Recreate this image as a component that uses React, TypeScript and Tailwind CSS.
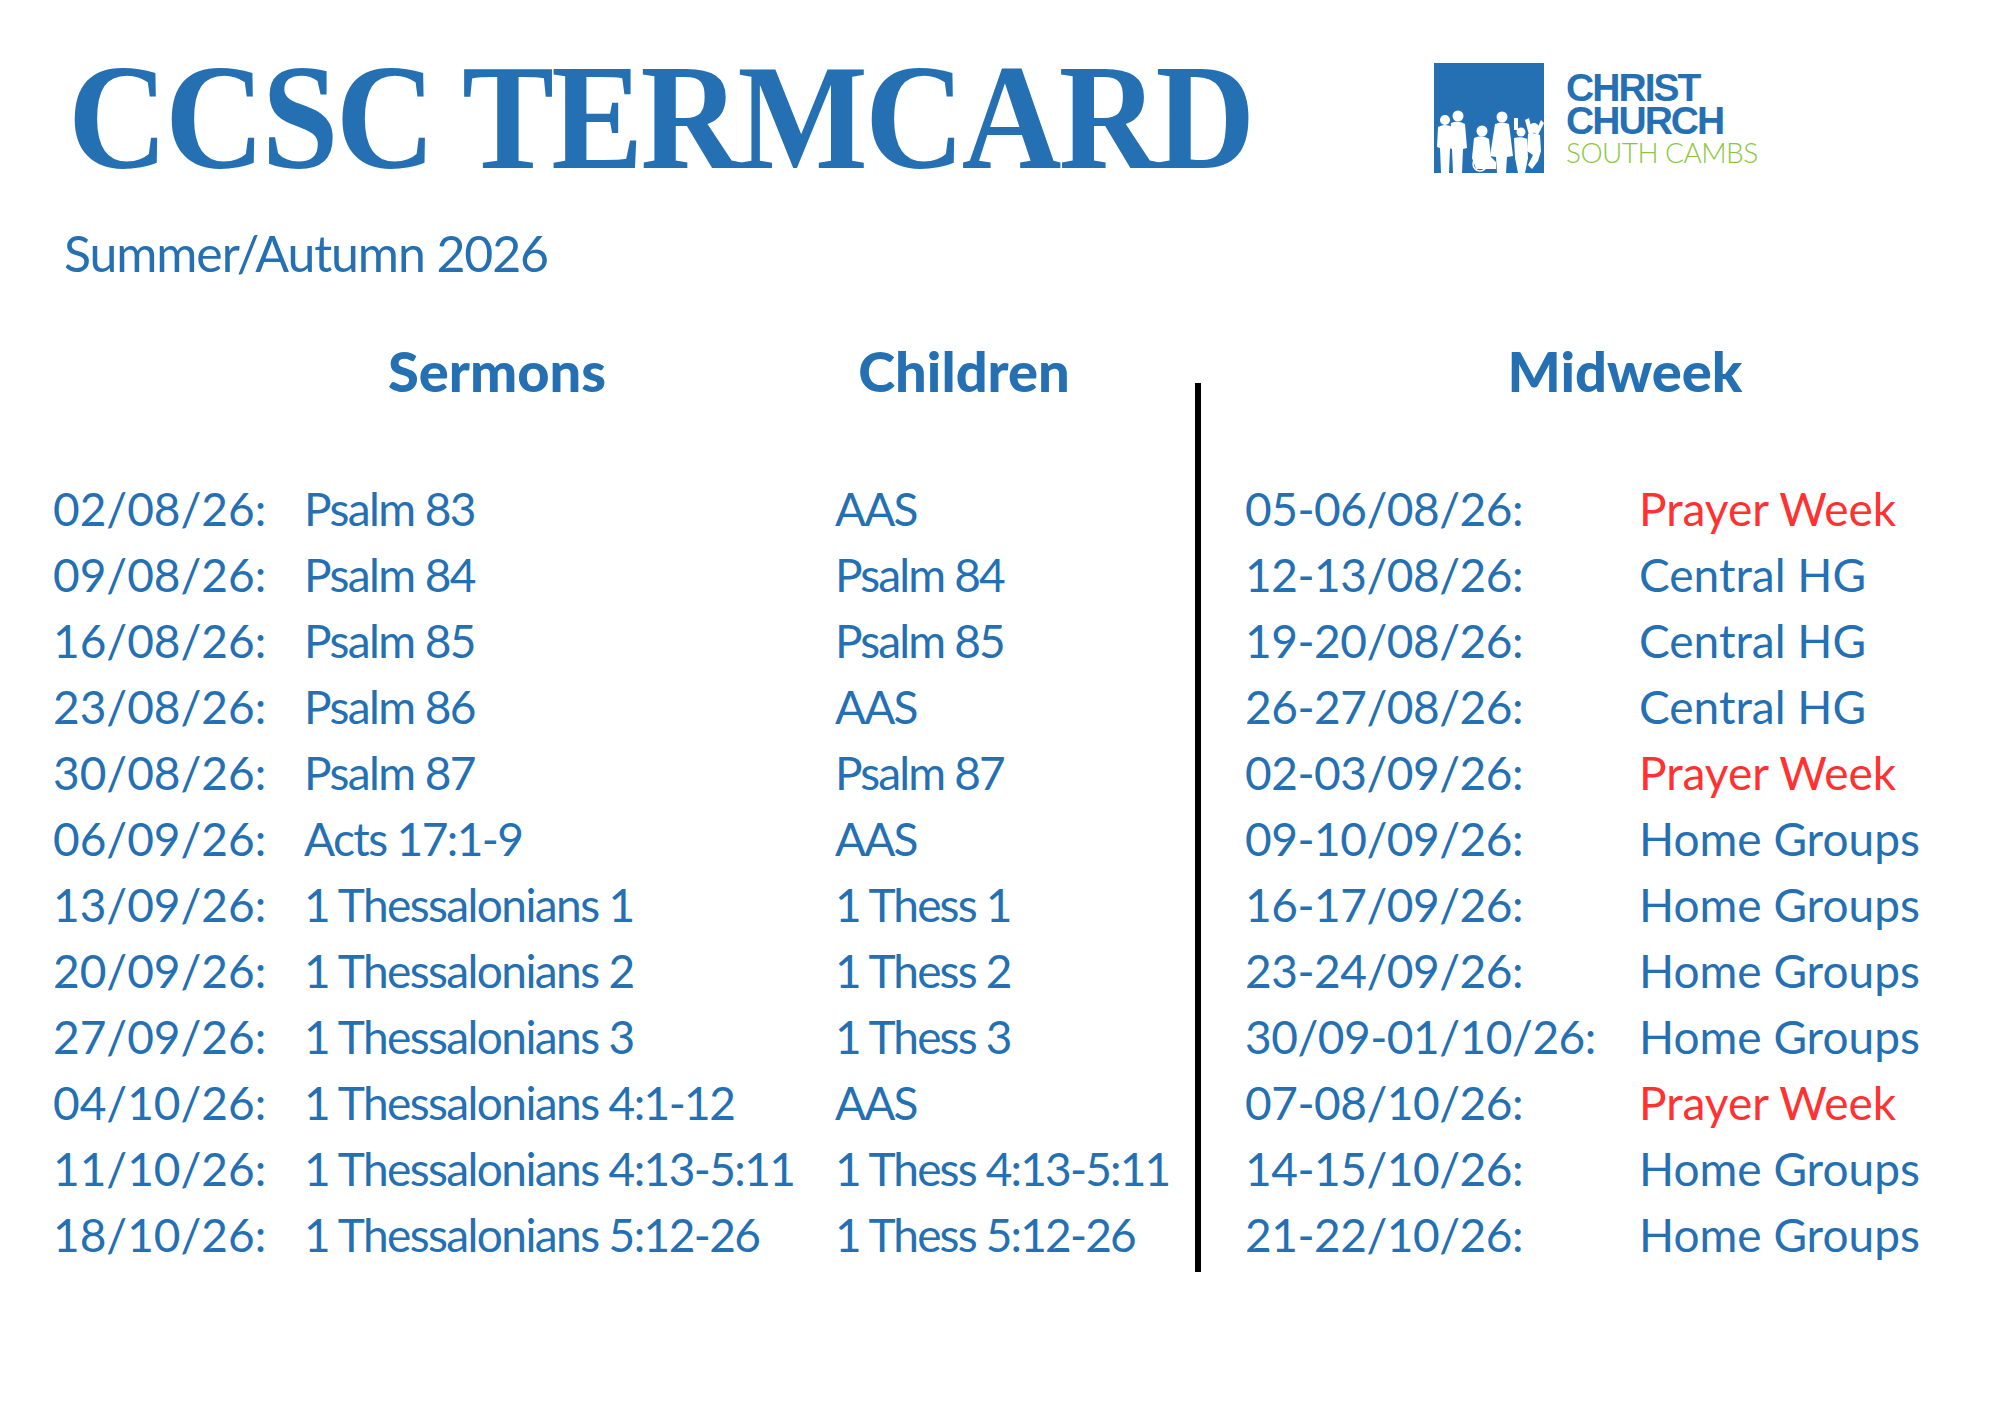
const sermons: [string, string, string][] = [
  ['02/08/26:', 'Psalm 83', 'AAS'],
  ['09/08/26:', 'Psalm 84', 'Psalm 84'],
  ['16/08/26:', 'Psalm 85', 'Psalm 85'],
  ['23/08/26:', 'Psalm 86', 'AAS'],
  ['30/08/26:', 'Psalm 87', 'Psalm 87'],
  ['06/09/26:', 'Acts 17:1-9', 'AAS'],
  ['13/09/26:', '1 Thessalonians 1', '1 Thess 1'],
  ['20/09/26:', '1 Thessalonians 2', '1 Thess 2'],
  ['27/09/26:', '1 Thessalonians 3', '1 Thess 3'],
  ['04/10/26:', '1 Thessalonians 4:1-12', 'AAS'],
  ['11/10/26:', '1 Thessalonians 4:13-5:11', '1 Thess 4:13-5:11'],
  ['18/10/26:', '1 Thessalonians 5:12-26', '1 Thess 5:12-26'],
];

const midweek: [string, string][] = [
  ['05-06/08/26:', 'Prayer Week'],
  ['12-13/08/26:', 'Central HG'],
  ['19-20/08/26:', 'Central HG'],
  ['26-27/08/26:', 'Central HG'],
  ['02-03/09/26:', 'Prayer Week'],
  ['09-10/09/26:', 'Home Groups'],
  ['16-17/09/26:', 'Home Groups'],
  ['23-24/09/26:', 'Home Groups'],
  ['30/09-01/10/26:', 'Home Groups'],
  ['07-08/10/26:', 'Prayer Week'],
  ['14-15/10/26:', 'Home Groups'],
  ['21-22/10/26:', 'Home Groups'],
];

function LogoMark() {
  // blue square with white silhouettes of people along the bottom
  return (
    <svg width="110" height="110" viewBox="0 0 110 110" className="shrink-0">
      <rect width="110" height="110" fill="#2470b3" />
      <g fill="#fff">
        <circle cx="11" cy="57" r="5" />
        <path d="M4 64 Q11 60 18 64 L19 84 L16 85 L15 110 L7 110 L6 85 L3 84 Z" />
        <circle cx="24" cy="53" r="5.5" />
        <path d="M17 60 Q24 57 31 61 L33 85 L29 86 L28 110 L19 110 L18 86 L15 85 Z" />
        <circle cx="48" cy="68" r="5.5" />
        <path d="M40 75 Q48 71 55 76 L57 94 L62 99 L62 106 L42 106 L38 95 Z" />
        <circle cx="68" cy="54" r="5.5" />
        <path d="M61 61 Q68 58 75 61 L79 93 L73 94 L72 110 L63 110 L62 94 L56 93 Z" />
        <circle cx="87" cy="69" r="4.5" />
        <path d="M80 67 L80 55 L84 55 L84 67 Z" />
        <path d="M80 75 Q87 73 93 76 L94 95 L91 110 L84 110 L81 95 Z" />
        <circle cx="100" cy="65" r="5" />
        <path d="M91 57 L95 55 L99 71 L95 72 Z" />
        <path d="M107 57 L110 60 L104 72 L101 70 Z" />
        <path d="M94 71 Q100 69 106 72 L107 88 L104 98 L98 106 L94 102 L99 92 L93 88 Z" />
      </g>
      <circle cx="46" cy="101" r="7" fill="none" stroke="#fff" strokeWidth="1.5" />
    </svg>
  );
}

function Logo() {
  return (
    <div className="mt-[21px] flex items-start gap-[22px]">
      <LogoMark />
      <div className="mt-[8px] flex flex-col">
        <div className="font-['Liberation_Sans',sans-serif] text-[39px] font-bold leading-[33px] tracking-[-0.05em] text-[#2470b3]">
          CHRIST
        </div>
        <div className="font-['Liberation_Sans',sans-serif] text-[39px] font-bold leading-[33px] tracking-[-0.05em] text-[#2470b3]">
          CHURCH
        </div>
        <div className="font-['Lato',sans-serif] text-[28px] font-light leading-[30px] tracking-[-0.02em] text-[#8cc63f]">
          SOUTH CAMBS
        </div>
      </div>
    </div>
  );
}

export default function App() {
  return (
    <div className="relative h-[1414px] w-[2000px] overflow-hidden bg-white font-['Lato',sans-serif] text-[#2470b3]">
      {/* title + logo */}
      <div className="flex items-start pl-[68px] pt-[42px]">
        <div className="w-[1366px] shrink-0">
          <h1 className="origin-left scale-x-[0.92] whitespace-nowrap font-['Liberation_Serif',serif] text-[150px] font-bold leading-none tracking-[-0.02em]">
            CCSC TERMCARD
          </h1>
        </div>
        <Logo />
      </div>

      <p className="mt-[36px] pl-[64px] text-[50px] leading-none tracking-[-0.022em]">Summer/Autumn 2026</p>

      {/* timetable */}
      <div className="mt-[65px] flex items-start">
        <div className="w-[1195px] shrink-0">
          <div className="flex text-[56px] font-black leading-none">
            <div className="ml-[337px] w-[320px] shrink-0 text-center">Sermons</div>
            <div className="w-[614px] shrink-0 text-center">Children</div>
          </div>
          <div className="mt-[77px] grid grid-cols-[251px_531px_1fr] pl-[53px] text-[46px] leading-[66px]">
            {sermons.map(([date, sermon, kids]) => (
              <div key={date} className="contents">
                <span className="whitespace-nowrap">{date}</span>
                <span className="whitespace-nowrap tracking-[-0.035em]">{sermon}</span>
                <span className="whitespace-nowrap tracking-[-0.04em]">{kids}</span>
              </div>
            ))}
          </div>
        </div>

        <div className="mt-[40px] h-[889px] w-[6px] shrink-0 bg-black" />

        <div className="flex-1">
          <div className="pl-[49px] text-center text-[56px] font-black leading-none">Midweek</div>
          <div className="mt-[77px] grid grid-cols-[394px_1fr] pl-[44px] text-[46px] leading-[66px]">
            {midweek.map(([date, what]) => (
              <div key={date} className="contents">
                <span className="whitespace-nowrap tracking-[-0.01em]">{date}</span>
                <span className={what === 'Prayer Week' ? 'whitespace-nowrap text-[#ff3131]' : 'whitespace-nowrap'}>
                  {what}
                </span>
              </div>
            ))}
          </div>
        </div>
      </div>
    </div>
  );
}
